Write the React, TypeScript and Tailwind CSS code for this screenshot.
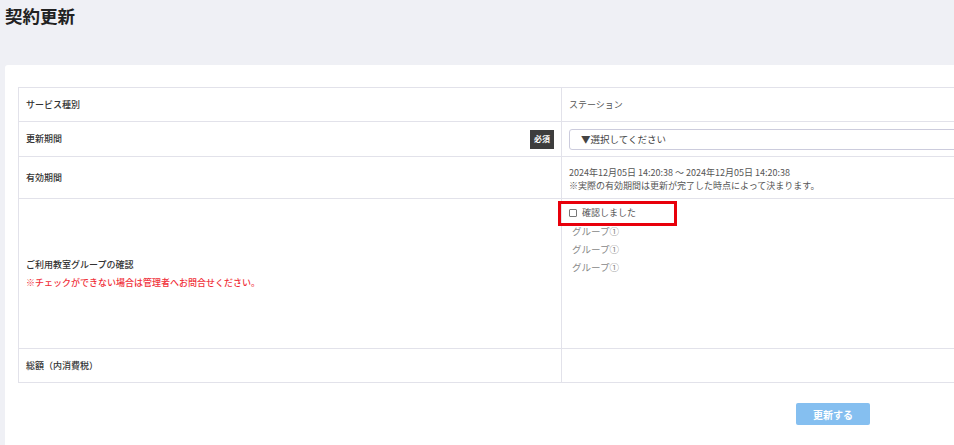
export default function App() {
  const font = { fontFamily: '"Noto Sans CJK JP", "Noto Sans", sans-serif' }
  const groups = ['グループ①', 'グループ①', 'グループ①']

  return (
    <div className="w-[954px] h-[445px] overflow-hidden bg-[#eff0f5]" style={font}>
      <h1 className="pl-[5px] pt-[3px] text-[17.5px] font-bold leading-[26px] text-[#222]">契約更新</h1>

      <div className="mt-[36px] ml-[5px] w-[1000px] h-[400px] bg-white rounded-tl-[3px] pt-[22px] pl-[13px]">
        <table className="w-[980px] border-collapse text-[9px] text-[#333]">
          <tbody>
            <tr className="h-[34px]">
              <td className="w-[543px] border border-[#e2e2ea] px-[7px] font-medium">サービス種別</td>
              <td className="border border-[#e2e2ea] px-[7px] text-[#555]">ステーション</td>
            </tr>
            <tr className="h-[35px]">
              <td className="border border-[#e2e2ea] px-[7px] font-medium">
                <div className="flex items-center justify-between">
                  <span>更新期間</span>
                  <span className="bg-[#3d3d3d] text-white text-[8px] font-bold px-[4px] h-[19px] flex items-center">必須</span>
                </div>
              </td>
              <td className="border border-[#e2e2ea] px-[7px]">
                <div className="h-[21px] border border-[#ccd] rounded-[3px] flex items-center pl-[11px] text-[9.5px] text-[#444]">
                  ▼選択してください
                </div>
              </td>
            </tr>
            <tr className="h-[42px]">
              <td className="border border-[#e2e2ea] px-[7px] font-medium">有効期間</td>
              <td className="border border-[#e2e2ea] px-[7px] text-[#555] leading-[13px] pt-[2px]">
                <div>2024年12月05日 14:20:38 ～ 2024年12月05日 14:20:38</div>
                <div>※実際の有効期間は更新が完了した時点によって決まります。</div>
              </td>
            </tr>
            <tr className="h-[150px]">
              <td className="border border-[#e2e2ea] px-[7px] font-medium leading-[18px]">
                <div>ご利用教室グループの確認</div>
                <div className="text-[#f0303a]">※チェックができない場合は管理者へお問合せください。</div>
              </td>
              <td className="border border-[#e2e2ea] px-[7px] align-top">
                <div className="relative pt-[7px]">
                  <div className="absolute left-[-11px] top-[2px] w-[119px] h-[25px] border-[3px] border-[#e8000b]" />
                  <label className="flex items-center gap-[5px] h-[13px] text-[#555]">
                    <span className="w-[8px] h-[8px] border border-[#777] rounded-[1px] bg-white" />
                    確認しました
                  </label>
                  <div className="pl-[3px] pt-[3px] text-[9.5px] text-[#888] leading-[18px]">
                    {groups.map((g, i) => (
                      <div key={i}>{g}</div>
                    ))}
                  </div>
                </div>
              </td>
            </tr>
            <tr className="h-[34px]">
              <td className="border border-[#e2e2ea] px-[7px] font-medium">総額（内消費税）</td>
              <td className="border border-[#e2e2ea] px-[7px]"></td>
            </tr>
          </tbody>
        </table>

        <div className="flex mt-[20px]">
          <button className="ml-[778px] w-[74px] h-[22px] rounded-[2px] bg-[#85bff0] text-white text-[10px] font-bold">
            更新する
          </button>
        </div>
      </div>
    </div>
  )
}
